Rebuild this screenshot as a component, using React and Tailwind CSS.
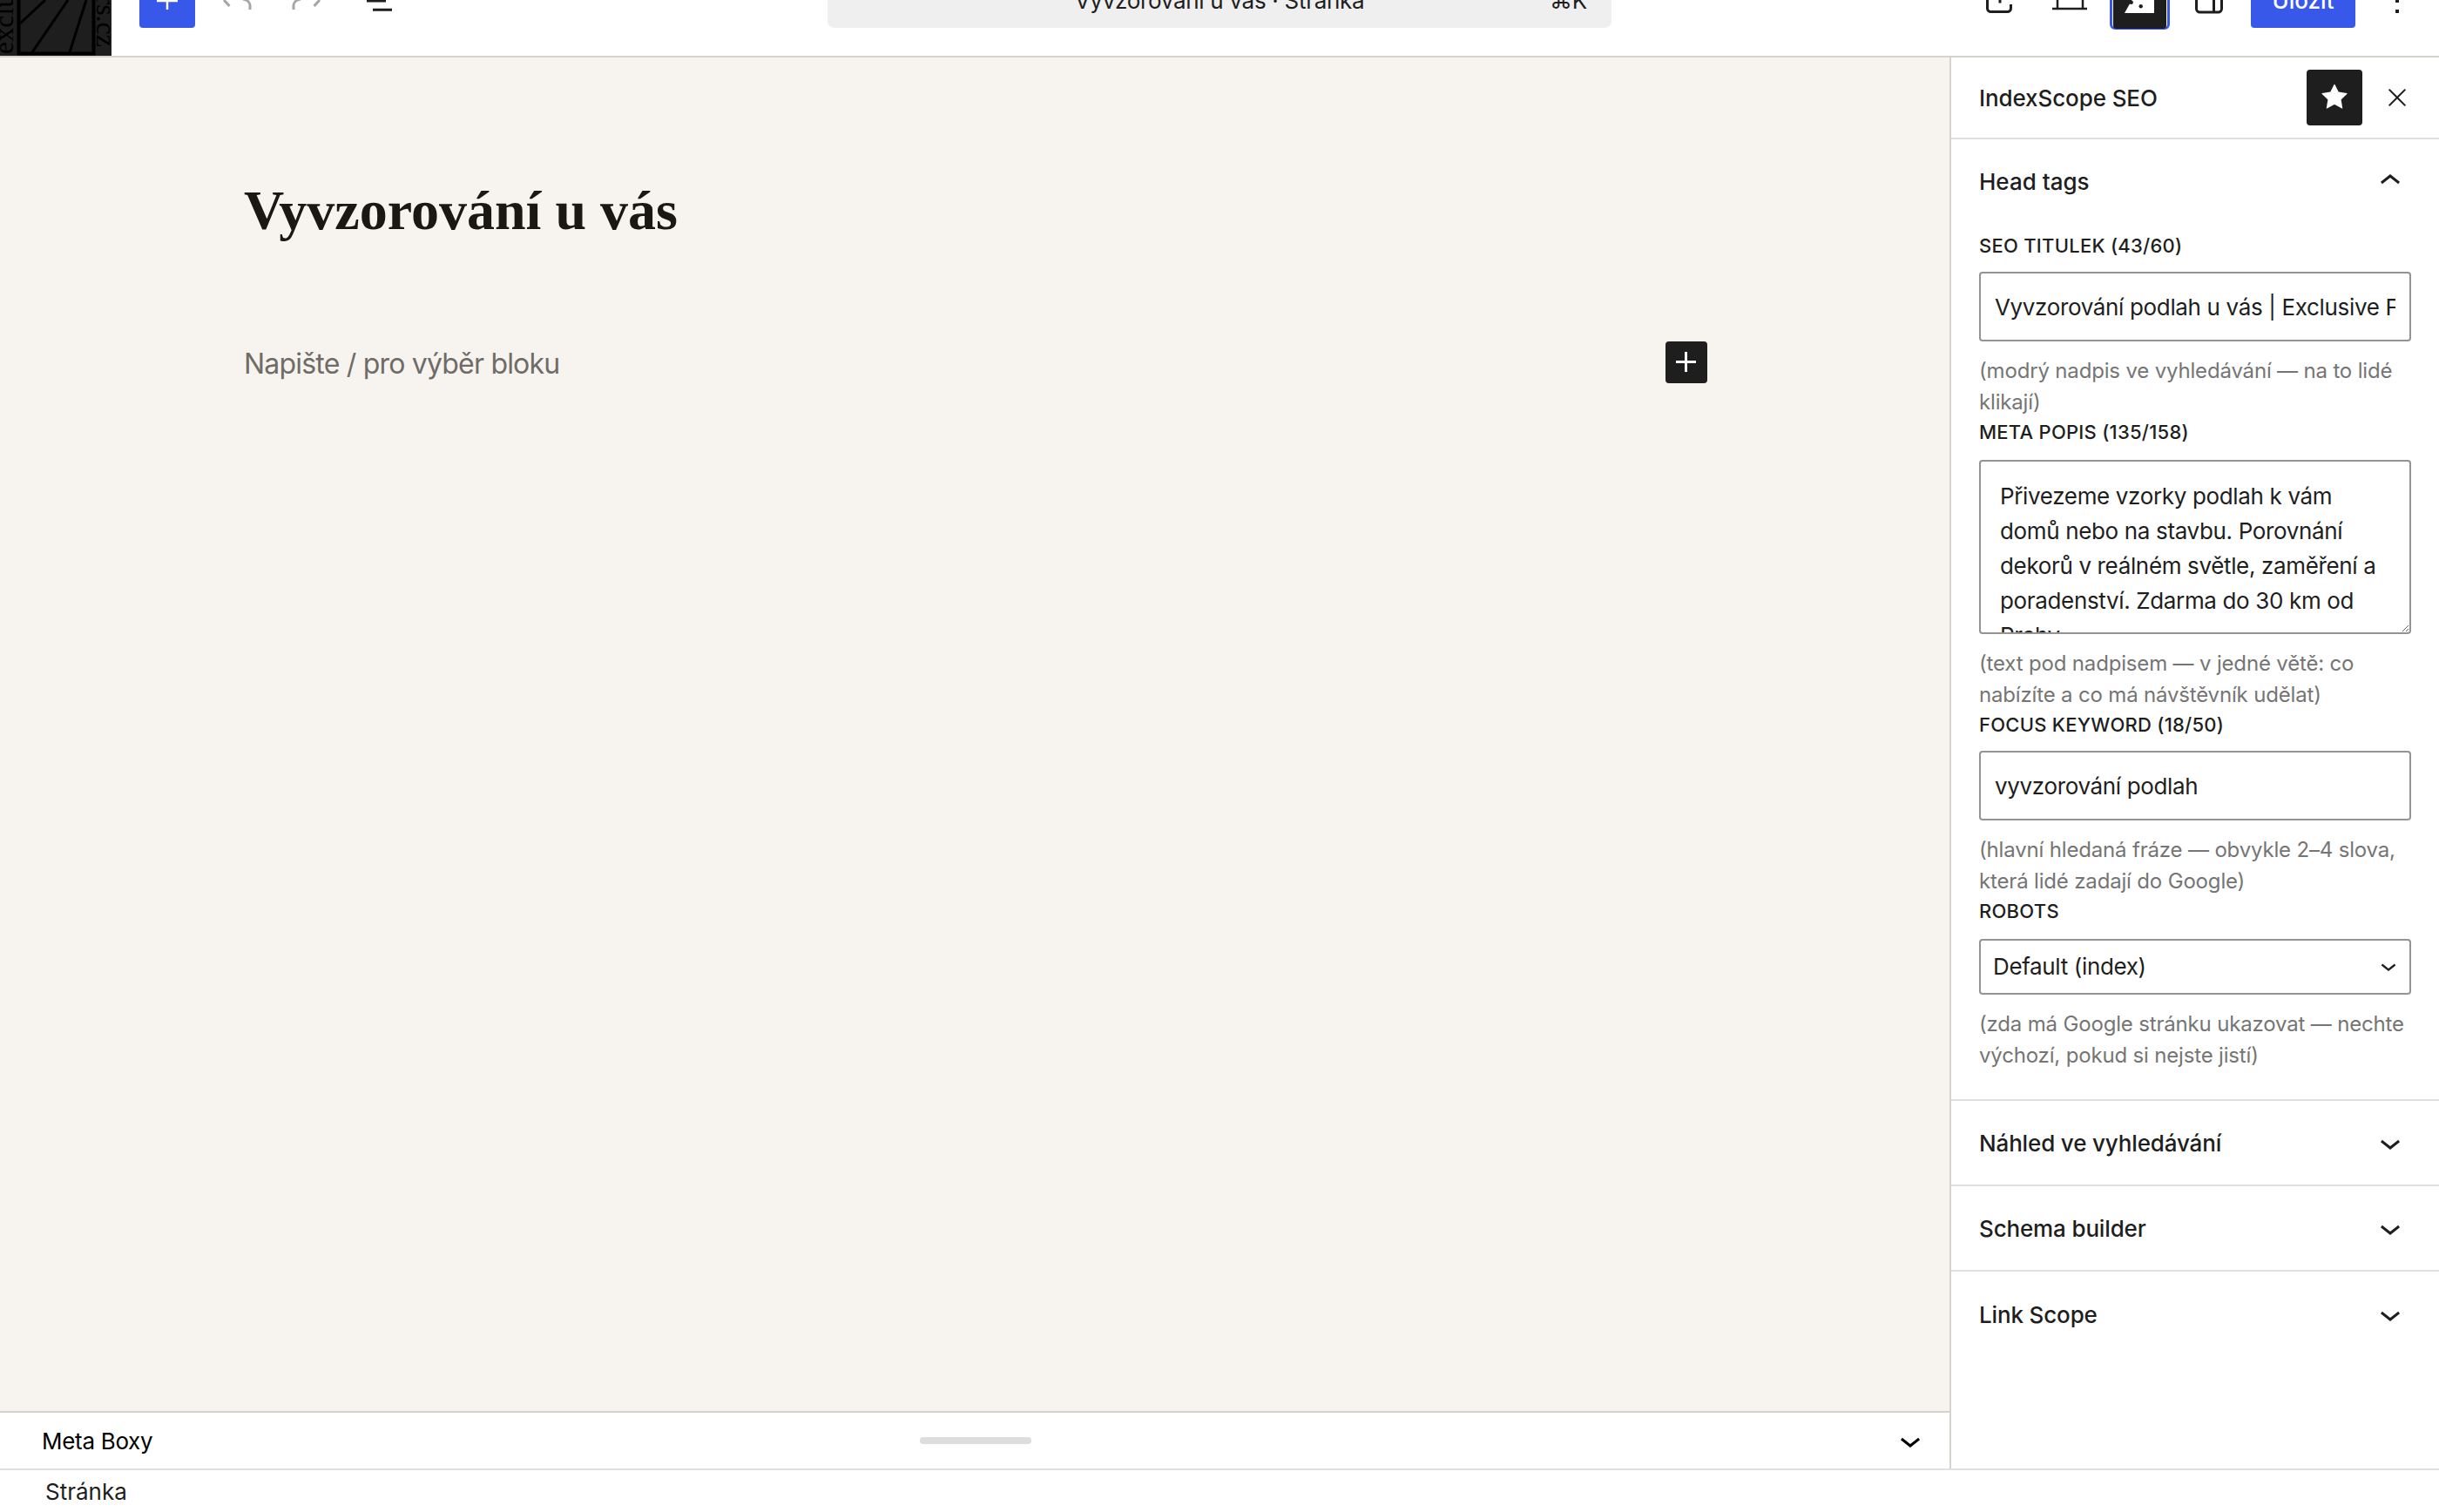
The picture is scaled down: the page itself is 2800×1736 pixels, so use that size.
const inputClass =
  "block w-full rounded-[4px] border-2 border-[#949494] bg-white text-[26px] tracking-[-0.35px] text-[#1e1e1e] outline-none";

function ChevronDownIcon({ size = 48, className = "" }) {
  return (
    <svg viewBox="0 0 24 24" width={size} height={size} fill="currentColor" className={className}>
      <path d="M17.5 11.6L12 16l-5.5-4.4.9-1.2L12 14l4.6-3.6z" />
    </svg>
  );
}

function Field({ label, hint, gap = "mt-[16px]", children }) {
  return (
    <div>
      <div className="h-[28px] text-[22px] leading-[28px] font-medium tracking-[0.25px] text-[#1e1e1e]">{label}</div>
      <div className={gap}>{children}</div>
      <p className="mt-[16px] mb-[2px] text-[24px] leading-[36px] tracking-[-0.17px] text-[#757575]">{hint}</p>
    </div>
  );
}

function PanelRow({ title, last }) {
  return (
    <div className={`flex h-[98px] shrink-0 items-center justify-between pl-[32px] pr-[32px] text-[#1e1e1e] ${last ? "" : "border-b-2 border-[#e0e0e0]"}`}>
      <span className="text-[26px] font-medium tracking-[-0.15px]">{title}</span>
      <ChevronDownIcon />
    </div>
  );
}

function Logo() {
  return (
    <svg viewBox="0 0 128 64" className="h-[64px] w-[128px] shrink-0 bg-[#1e1e1e]">
      <path d="M21.500 -4V61.500H107.500V-4" fill="none" stroke="#000" strokeWidth="4" />
      <path d="M23 27L52 0M37 60L78 0M80 60L99 0" fill="none" stroke="#000" strokeWidth="3" />
      <text transform="translate(15 62) rotate(-90)" fontFamily="Liberation Serif, serif" fontSize="32" fill="#000">exclu</text>
      <text transform="translate(111 54) rotate(90)" textAnchor="end" fontFamily="Liberation Serif, serif" fontSize="32" fill="#000">rs.cz</text>
    </svg>
  );
}

function TopBar() {
  return (
    <header className="flex h-[66px] shrink-0 items-start overflow-hidden border-b-2 border-[#d6d3ce] bg-white text-[#1e1e1e]">
      <Logo />

      {/* inserter */}
      <div className="ml-[32px] h-[32px] w-[64px] shrink-0 rounded-b-[4px] bg-[#3858e9]">
        <svg viewBox="0 0 64 32" className="h-[32px] w-[64px]">
          <path d="M20 1H44M32 -2V11" stroke="#fff" strokeWidth="2.500" fill="none" />
        </svg>
      </div>

      {/* undo / redo */}
      <svg viewBox="0 0 64 32" className="ml-[16px] h-[32px] w-[64px] shrink-0">
        <path d="M17 0L23.500 7M47 11V6C47 3 44 0 39 -1" stroke="#a6a6a6" strokeWidth="3" fill="none" />
      </svg>
      <svg viewBox="0 0 64 32" className="ml-[16px] h-[32px] w-[64px] shrink-0">
        <path d="M47 0L40.500 7M17 11V6C17 3 20 0 25 -1" stroke="#a6a6a6" strokeWidth="3" fill="none" />
      </svg>

      {/* list view */}
      <svg viewBox="0 0 64 32" className="ml-[20px] h-[32px] w-[64px] shrink-0">
        <path d="M17 1H39M24 11.300H46" stroke="#1e1e1e" strokeWidth="3" fill="none" />
      </svg>

      {/* command center */}
      <div className="relative -mt-[32px] ml-[482px] flex h-[64px] w-[900px] shrink-0 items-center justify-center rounded-[8px] bg-[#efefef] text-[26px] tracking-[-0.3px]">
        <span>Vyvzorování u vás · Stránka</span>
        <span className="absolute right-[28px]">⌘K</span>
      </div>

      {/* view */}
      <svg viewBox="0 0 64 32" className="ml-[413px] h-[32px] w-[64px] shrink-0">
        <path d="M18.500 -2V9.500A4 4 0 0 0 22.500 13.500H41.500A4 4 0 0 0 45.500 9.500V5" stroke="#1e1e1e" strokeWidth="3" fill="none" />
        <path d="M33 -1V3.500" stroke="#1e1e1e" strokeWidth="3" fill="none" />
      </svg>

      {/* device preview */}
      <svg viewBox="0 0 64 32" className="ml-[17px] h-[32px] w-[64px] shrink-0">
        <path d="M18 -2V9M47 -2V9M12 10H52" stroke="#1e1e1e" strokeWidth="2.500" fill="none" />
      </svg>

      {/* plugin toggle, pressed */}
      <div className="-mt-[32px] ml-[14px] h-[66px] w-[69px] shrink-0 rounded-[6px] border-[3px] border-[#3858e9] bg-white p-[1px]">
        <svg viewBox="0 0 61 61" className="h-[61px] w-[61px] rounded-[4px] bg-[#1e1e1e]">
          <path d="M13 43L22 27H47V43Z" fill="#fff" />
          <circle cx="20.700" cy="30.700" r="2.200" fill="#1e1e1e" />
          <circle cx="31.700" cy="35.300" r="2.200" fill="#1e1e1e" />
        </svg>
      </div>

      {/* settings */}
      <svg viewBox="0 0 64 32" className="ml-[13px] h-[32px] w-[64px] shrink-0">
        <path d="M17.500 -2V10A4 4 0 0 0 21.500 14H42.500A4 4 0 0 0 46.500 10V-2M37.500 -2V14" stroke="#1e1e1e" strokeWidth="3" fill="none" />
      </svg>

      {/* save */}
      <div className="-mt-[32px] ml-[16px] flex h-[64px] w-[120px] shrink-0 items-center justify-center rounded-[4px] bg-[#3858e9] text-[26px] font-medium text-white">
        Uložit
      </div>

      {/* options */}
      <svg viewBox="0 0 64 32" className="ml-[16px] h-[32px] w-[64px] shrink-0">
        <path d="M30 -2H34V3H30ZM30 11H34V15H30Z" fill="#1e1e1e" />
      </svg>
    </header>
  );
}

function Sidebar() {
  return (
    <aside className="flex w-[562px] shrink-0 flex-col border-l-2 border-[#d6d3ce] bg-white">
      <div className="flex h-[94px] shrink-0 items-center border-b-2 border-[#e0e0e0] pl-[32px] text-[#1e1e1e]">
        <span className="flex-1 text-[26px] font-medium tracking-[-0.1px]">IndexScope SEO</span>
        <div className="flex h-[64px] w-[64px] items-center justify-center rounded-[4px] bg-[#1e1e1e] text-white">
          <svg viewBox="0 0 24 24" width="48" height="48" fill="currentColor">
            <path d="M11.776 4.454a.25.25 0 01.448 0l2.069 4.192a.25.25 0 00.188.137l4.626.672a.25.25 0 01.139.426l-3.348 3.263a.25.25 0 00-.072.222l.79 4.607a.25.25 0 01-.362.263l-4.138-2.175a.25.25 0 00-.232 0l-4.138 2.175a.25.25 0 01-.363-.263l.79-4.607a.25.25 0 00-.071-.222L4.754 9.881a.25.25 0 01.139-.426l4.626-.672a.25.25 0 00.188-.137l2.069-4.192z" />
          </svg>
        </div>
        <svg viewBox="0 0 24 24" width="32" height="32" fill="currentColor" className="ml-[24px] mr-[32px]">
          <path d="m13.06 12 6.47-6.470-1.060-1.060L12 10.940 5.530 4.470 4.470 5.530 10.940 12l-6.470 6.470 1.060 1.060L12 13.060l6.470 6.470 1.060-1.060L13.060 12Z" />
        </svg>
      </div>

      <div className="h-[1104px] shrink-0 border-b-2 border-[#e0e0e0]">
        <div className="flex h-[108px] items-center justify-between pb-[12px] pl-[32px] pr-[32px] text-[#1e1e1e]">
          <span className="text-[26px] font-medium">Head tags</span>
          <svg viewBox="0 0 24 24" width="48" height="48" fill="currentColor">
            <path d="M6.500 12.400L12 8l5.500 4.400-.9 1.200L12 10l-4.600 3.600z" />
          </svg>
        </div>
        <div className="pl-[32px] pr-[32px]">
          <Field label="SEO TITULEK (43/60)" hint="(modrý nadpis ve vyhledávání — na to lidé klikají)">
            <input
              readOnly
              value="Vyvzorování podlah u vás | Exclusive Floors"
              className={`${inputClass} h-[80px] px-[16px]`}
            />
          </Field>
          <Field
            label="META POPIS (135/158)"
            gap="mt-[18px]"
            hint="(text pod nadpisem — v jedné větě: co nabízíte a co má návštěvník udělat)"
          >
            <textarea
              readOnly
              value="Přivezeme vzorky podlah k vám domů nebo na stavbu. Porovnání dekorů v reálném světle, zaměření a poradenství. Zdarma do 30 km od Prahy."
              className={`${inputClass} h-[200px] resize-y overflow-hidden px-[22px] pt-[20px] leading-[40px]`}
            />
          </Field>
          <Field label="FOCUS KEYWORD (18/50)" hint="(hlavní hledaná fráze — obvykle 2–4 slova, která lidé zadají do Google)">
            <input readOnly value="vyvzorování podlah" className={`${inputClass} h-[80px] px-[16px]`} />
          </Field>
          <Field
            label="ROBOTS"
            gap="mt-[18px]"
            hint="(zda má Google stránku ukazovat — nechte výchozí, pokud si nejste jistí)"
          >
            <div className="relative">
              <select className={`${inputClass} h-[64px] appearance-none pb-[2px] pl-[14px] pr-[14px]`} defaultValue="index">
                <option value="index">Default (index)</option>
              </select>
              <ChevronDownIcon size={36} className="pointer-events-none absolute right-[8px] top-[13px] text-[#1e1e1e]" />
            </div>
          </Field>
        </div>
      </div>

      <PanelRow title="Náhled ve vyhledávání" />
      <PanelRow title="Schema builder" />
      <PanelRow title="Link Scope" last />
    </aside>
  );
}

export default function App() {
  return (
    <div className="flex h-[1736px] w-[2800px] flex-col overflow-hidden bg-white font-['Inter',sans-serif]">
      <TopBar />
      <div className="flex min-h-0 flex-1">
        <div className="flex w-[2238px] shrink-0 flex-col">
          <main className="flex-1 bg-[#f7f4ef] pl-[280px]">
            <h1 className="mt-[137px] font-['Liberation_Serif',serif] text-[64px] leading-[78px] font-bold text-[#1a1714]">
              Vyvzorování u vás
            </h1>
            <div className="mt-[111px] flex h-[48px] items-center justify-between pr-[278px]">
              <span className="pt-[3px] text-[32px] tracking-[-0.8px] text-[#6f6b67]">Napište / pro výběr bloku</span>
              <div className="flex h-[48px] w-[48px] items-center justify-center rounded-[4px] bg-[#1e1e1e] text-white">
                <svg viewBox="0 0 24 24" width="48" height="48" fill="currentColor">
                  <path d="M11 12.500V17.500H12.500V12.500H17.500V11H12.500V6H11V11H6V12.500H11Z" />
                </svg>
              </div>
            </div>
          </main>
          <div className="grid h-[66px] shrink-0 grid-cols-[1008px_128px_1fr] items-center border-t-2 border-[#d6d3ce] pl-[48px] pr-[21px]">
            <span className="text-[26px] tracking-[-0.3px] text-black">Meta Boxy</span>
            <div className="h-[8px] w-[128px] rounded-[4px] bg-[#ddd]" />
            <ChevronDownIcon className="justify-self-end text-black" />
          </div>
        </div>
        <Sidebar />
      </div>
      <div className="flex h-[50px] shrink-0 items-center border-t-2 border-[#e0e0e0] pl-[52px] text-[26px] text-[#1e1e1e]">
        Stránka
      </div>
    </div>
  );
}
